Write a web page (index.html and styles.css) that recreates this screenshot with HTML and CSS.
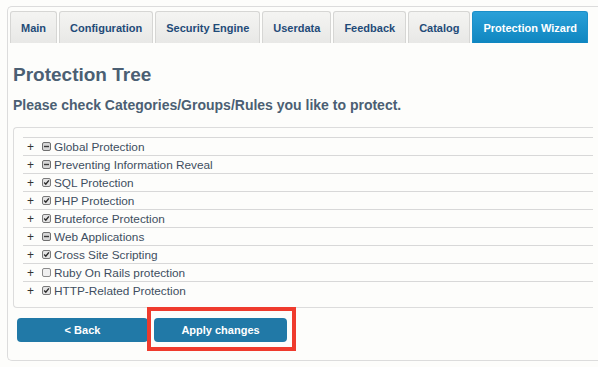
FILE: index.html
```html
<!DOCTYPE html>
<html lang="en">
<head>
    <meta charset="UTF-8">
    <title>Protection Wizard</title>
    <link rel="stylesheet" href="styles.css">
</head>
<body>
    <svg width="0" height="0" class="defs">
        <symbol id="cb-check" viewBox="0 0 9 9">
            <rect x="0.5" y="0.5" width="8" height="8" rx="1.5" fill="#e4e4e4" stroke="#7a7a7a"/>
            <path d="M2.2 4.6 L3.8 6.3 L6.9 2.4" fill="none" stroke="#2b2b2b" stroke-width="1.4"/>
        </symbol>
        <symbol id="cb-part" viewBox="0 0 9 9">
            <rect x="0.5" y="0.5" width="8" height="8" rx="1.5" fill="#d6d6d6" stroke="#6f6f6f"/>
            <path d="M2 4.5 H7" stroke="#3a3a3a" stroke-width="1.4"/>
        </symbol>
        <symbol id="cb-none" viewBox="0 0 9 9">
            <rect x="0.5" y="0.5" width="8" height="8" rx="1.5" fill="#f0f0f0" stroke="#8a8a8a"/>
        </symbol>
    </svg>

    <div class="panel">
        <ul class="tabs">
            <li class="tab">Main</li>
            <li class="tab">Configuration</li>
            <li class="tab">Security Engine</li>
            <li class="tab">Userdata</li>
            <li class="tab">Feedback</li>
            <li class="tab">Catalog</li>
            <li class="tab active">Protection Wizard</li>
        </ul>

        <div class="content">
            <h1>Protection Tree</h1>
            <h2>Please check Categories/Groups/Rules you like to protect.</h2>

            <div class="tree">
                <div class="row"><span class="plus">+</span><svg class="cb"><use href="#cb-part"/></svg>Global Protection</div>
                <div class="row"><span class="plus">+</span><svg class="cb"><use href="#cb-part"/></svg>Preventing Information Reveal</div>
                <div class="row"><span class="plus">+</span><svg class="cb"><use href="#cb-check"/></svg>SQL Protection</div>
                <div class="row"><span class="plus">+</span><svg class="cb"><use href="#cb-check"/></svg>PHP Protection</div>
                <div class="row"><span class="plus">+</span><svg class="cb"><use href="#cb-check"/></svg>Bruteforce Protection</div>
                <div class="row"><span class="plus">+</span><svg class="cb"><use href="#cb-part"/></svg>Web Applications</div>
                <div class="row"><span class="plus">+</span><svg class="cb"><use href="#cb-check"/></svg>Cross Site Scripting</div>
                <div class="row"><span class="plus">+</span><svg class="cb"><use href="#cb-none"/></svg>Ruby On Rails protection</div>
                <div class="row"><span class="plus">+</span><svg class="cb"><use href="#cb-check"/></svg>HTTP-Related Protection</div>
            </div>

            <div class="actions">
                <button class="btn back">&lt; Back</button>
                <button class="btn apply">Apply changes</button>
                <div class="highlight"></div>
            </div>
        </div>
    </div>
</body>
</html>
```

FILE: styles.css
```css
body {
    margin: 0;
    background-color: #fdfdfb;
    font-family: 'Liberation Sans', Arial, sans-serif;
    overflow: hidden;
}
.defs {
    position: absolute;
}
.panel {
    margin: 6px 0 0 7px;
    height: 355px;
    border: 1px solid #dcdcdc;
    border-right: none;
    border-radius: 5px 0 0 5px;
    box-sizing: border-box;
}
.tabs {
    display: flex;
    gap: 2px;
    list-style: none;
    margin: 0;
    padding: 4px 0 0 2px;
}
.tab {
    height: 32px;
    line-height: 32px;
    padding: 0 10px;
    font-size: 11px;
    font-weight: bold;
    color: #1f4b78;
    background: linear-gradient(#f4f4f2, #e8e8e6);
    border: 1px solid #d6d6d4;
    border-bottom: none;
    border-radius: 3px 3px 0 0;
    box-sizing: border-box;
}
.tab.active {
    color: #ffffff;
    background: linear-gradient(#2aa0d8, #0f86c0);
    border-color: #1b8fc8;
    padding: 0 10px;
}
.content {
    padding: 0 5px;
}
h1 {
    margin: 20px 0 0;
    font-size: 19px;
    line-height: 24px;
    color: #4b5f73;
}
h2 {
    margin: 9px 0 0;
    font-size: 14px;
    line-height: 18px;
    color: #4b5f73;
}
.tree {
    margin-top: 13px;
    padding: 9px 0 8px 9px;
    border: 1px solid #dcdcdc;
    border-right: none;
    border-radius: 4px 0 0 4px;
}
.row {
    display: flex;
    align-items: center;
    height: 18px;
    box-sizing: border-box;
    border-top: 1px solid #d8d8d8;
    font-size: 11.8px;
    color: #3e4e60;
}
.plus {
    width: 19px;
    padding-left: 4px;
    box-sizing: border-box;
    font-size: 12px;
    color: #333;
}
.cb {
    width: 9px;
    height: 9px;
    margin-right: 3px;
}
.actions {
    position: relative;
    display: flex;
    gap: 6px;
    margin: 10px 0 0 4px;
}
.btn {
    height: 24px;
    border: none;
    border-radius: 4px;
    background-color: #2179a7;
    color: #ffffff;
    font-family: 'Liberation Sans', Arial, sans-serif;
    font-size: 11px;
    font-weight: bold;
}
.back {
    width: 131px;
}
.apply {
    width: 133px;
}
.highlight {
    position: absolute;
    left: 130px;
    top: -11px;
    width: 149px;
    height: 44px;
    border: 4px solid #ef3b2d;
    box-sizing: border-box;
}
```
